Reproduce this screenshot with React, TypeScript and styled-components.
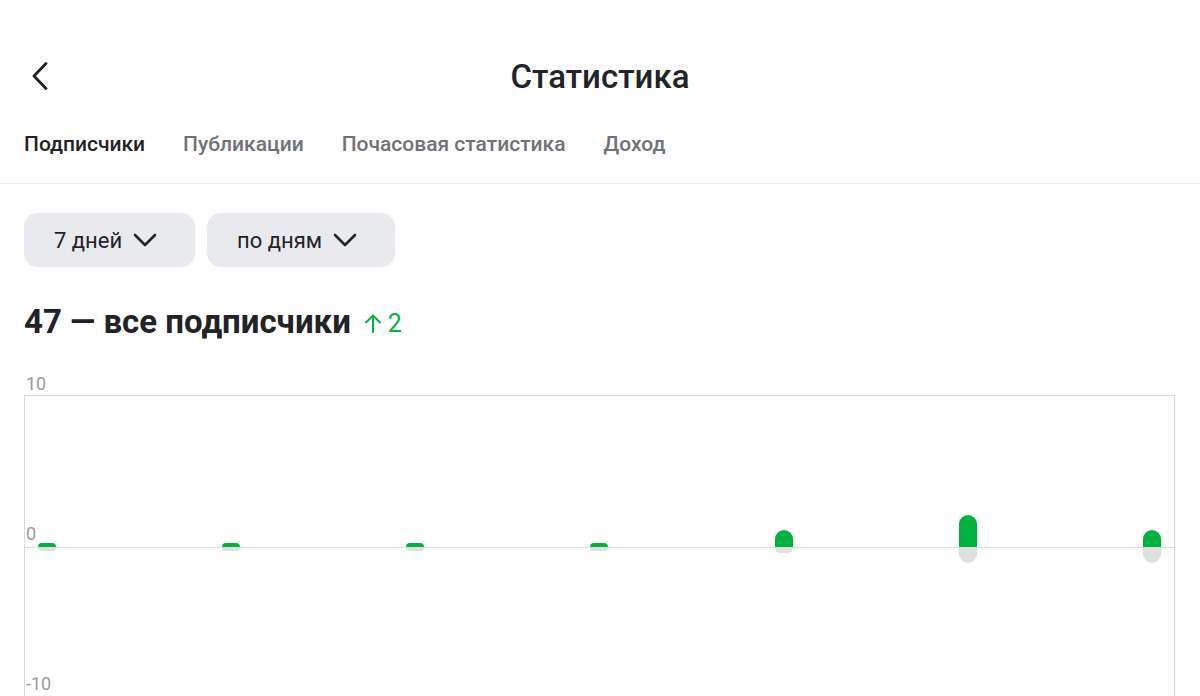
import React from "react";
import styled, { createGlobalStyle } from "styled-components";

const GlobalStyle = createGlobalStyle`
  html, body { margin: 0; padding: 0; background: #fff; }
  body { font-family: Roboto, "Noto Sans", Arial, sans-serif; color: #222327; overflow: hidden; }
  * { box-sizing: border-box; }
`;

const Page = styled.div`
  width: 1200px;
  height: 696px;
  overflow: hidden;
`;

const TopBar = styled.header`
  position: relative;
  height: 112px;
  padding-top: 42px;
  display: flex;
  align-items: center;
  justify-content: center;
`;

const BackButton = styled.button`
  position: absolute;
  left: 31px;
  top: 62px;
  width: 20px;
  height: 28px;
  padding: 0;
  border: none;
  background: none;
  display: flex;
  align-items: center;
  justify-content: flex-start;
  color: #222327;
  cursor: pointer;
`;

const Title = styled.h1`
  margin: 0;
  font-size: 33px;
  line-height: 40px;
  font-weight: 500;
  color: #222327;
`;

const Tabs = styled.nav`
  display: flex;
  gap: 38px;
  padding: 20px 24px 27px;
  border-bottom: 1px solid #ececee;
`;

const Tab = styled.span<{ $active?: boolean }>`
  font-size: 21px;
  line-height: 24px;
  font-weight: 500;
  color: ${(p) => (p.$active ? "#222327" : "#707277")};
`;

const Content = styled.main`
  padding: 29px 24px 0 24px;
  display: flex;
  flex-direction: column;
`;

const Filters = styled.div`
  display: flex;
  gap: 12px;
`;

const FilterButton = styled.button<{ $w: number }>`
  width: ${(p) => p.$w}px;
  height: 54px;
  border: none;
  border-radius: 14px;
  background: #e9eaed;
  padding: 0 0 0 30px;
  display: flex;
  align-items: center;
  gap: 11px;
  font-family: inherit;
  font-size: 22px;
  color: #222327;
`;

const Heading = styled.h2`
  margin: 37px 0 0;
  display: flex;
  align-items: baseline;
  gap: 14px;
  font-size: 33px;
  line-height: 36px;
  font-weight: 700;
  color: #222327;
`;

const Delta = styled.span`
  display: inline-flex;
  align-items: center;
  gap: 7px;
  font-size: 25px;
  font-weight: 400;
  color: #00b341;
`;

const ChartWrap = styled.div`
  margin-top: 53px;
  position: relative;
  width: 1151px;
  border: 1px solid #d9d9d9;
  border-bottom: none;
`;

const Half = styled.div<{ $upper?: boolean }>`
  height: ${(p) => (p.$upper ? "152px" : "160px")};
  display: flex;
  justify-content: space-between;
  align-items: ${(p) => (p.$upper ? "flex-end" : "flex-start")};
  padding: 0 13px;
  border-bottom: ${(p) => (p.$upper ? "1px solid #dedede" : "none")};
`;

const Bar = styled.div<{ $up?: boolean }>`
  width: 18px;
  background: ${(p) => (p.$up ? "#00b341" : "#e0e0e0")};
  border-radius: ${(p) => (p.$up ? "9px 9px 0 0" : "0 0 9px 9px")};
`;

const AxisLabel = styled.span`
  position: absolute;
  left: 1px;
  font-size: 18px;
  line-height: 20px;
  font-weight: 400;
  color: #9b9b9b;
`;

const Chevron = () => (
  <svg width="24" height="24" viewBox="0 0 24 24" fill="none">
    <path d="M2 7l10 10L22 7" stroke="#222327" strokeWidth="2.6" strokeLinecap="round" strokeLinejoin="round" />
  </svg>
);

const days = [
  { up: 0, down: 0 },
  { up: 0, down: 0 },
  { up: 0, down: 0 },
  { up: 0, down: 0 },
  { up: 1, down: 0 },
  { up: 2, down: 1 },
  { up: 1, down: 1 },
];

const upHeight = (v: number) => (v === 0 ? 4 : 15 * v + 2);
const downHeight = (v: number, up: number) => (v === 0 ? (up > 0 ? 5 : 3) : 15 * v);

export default function App() {
  return (
    <Page>
      <GlobalStyle />
      <TopBar>
        <BackButton aria-label="Назад">
          <svg width="18" height="28" viewBox="0 0 18 28" fill="none">
            <path d="M15 1.5L3 14l12 12.5" stroke="#222327" strokeWidth="2.8" strokeLinecap="round" strokeLinejoin="round" />
          </svg>
        </BackButton>
        <Title>Статистика</Title>
      </TopBar>
      <Tabs>
        <Tab $active>Подписчики</Tab>
        <Tab>Публикации</Tab>
        <Tab>Почасовая статистика</Tab>
        <Tab>Доход</Tab>
      </Tabs>
      <Content>
        <Filters>
          <FilterButton $w={171}>
            7 дней <Chevron />
          </FilterButton>
          <FilterButton $w={188}>
            по дням <Chevron />
          </FilterButton>
        </Filters>
        <Heading>
          47 — все подписчики
          <Delta>
            <svg width="16" height="19" viewBox="0 0 16 19" fill="none">
              <path d="M8 18V1.5M1 8.5L8 1.5l7 7" stroke="#00b341" strokeWidth="2" strokeLinecap="round" strokeLinejoin="round" />
            </svg>
            2
          </Delta>
        </Heading>
        <ChartWrap>
          <AxisLabel style={{ top: -22 }}>10</AxisLabel>
          <AxisLabel style={{ top: 128 }}>0</AxisLabel>
          <AxisLabel style={{ top: 278 }}>-10</AxisLabel>
          <Half $upper>
            {days.map((d, i) => (
              <Bar key={i} $up style={{ height: upHeight(d.up) }} />
            ))}
          </Half>
          <Half>
            {days.map((d, i) => (
              <Bar key={i} style={{ height: downHeight(d.down, d.up) }} />
            ))}
          </Half>
        </ChartWrap>
      </Content>
    </Page>
  );
}
